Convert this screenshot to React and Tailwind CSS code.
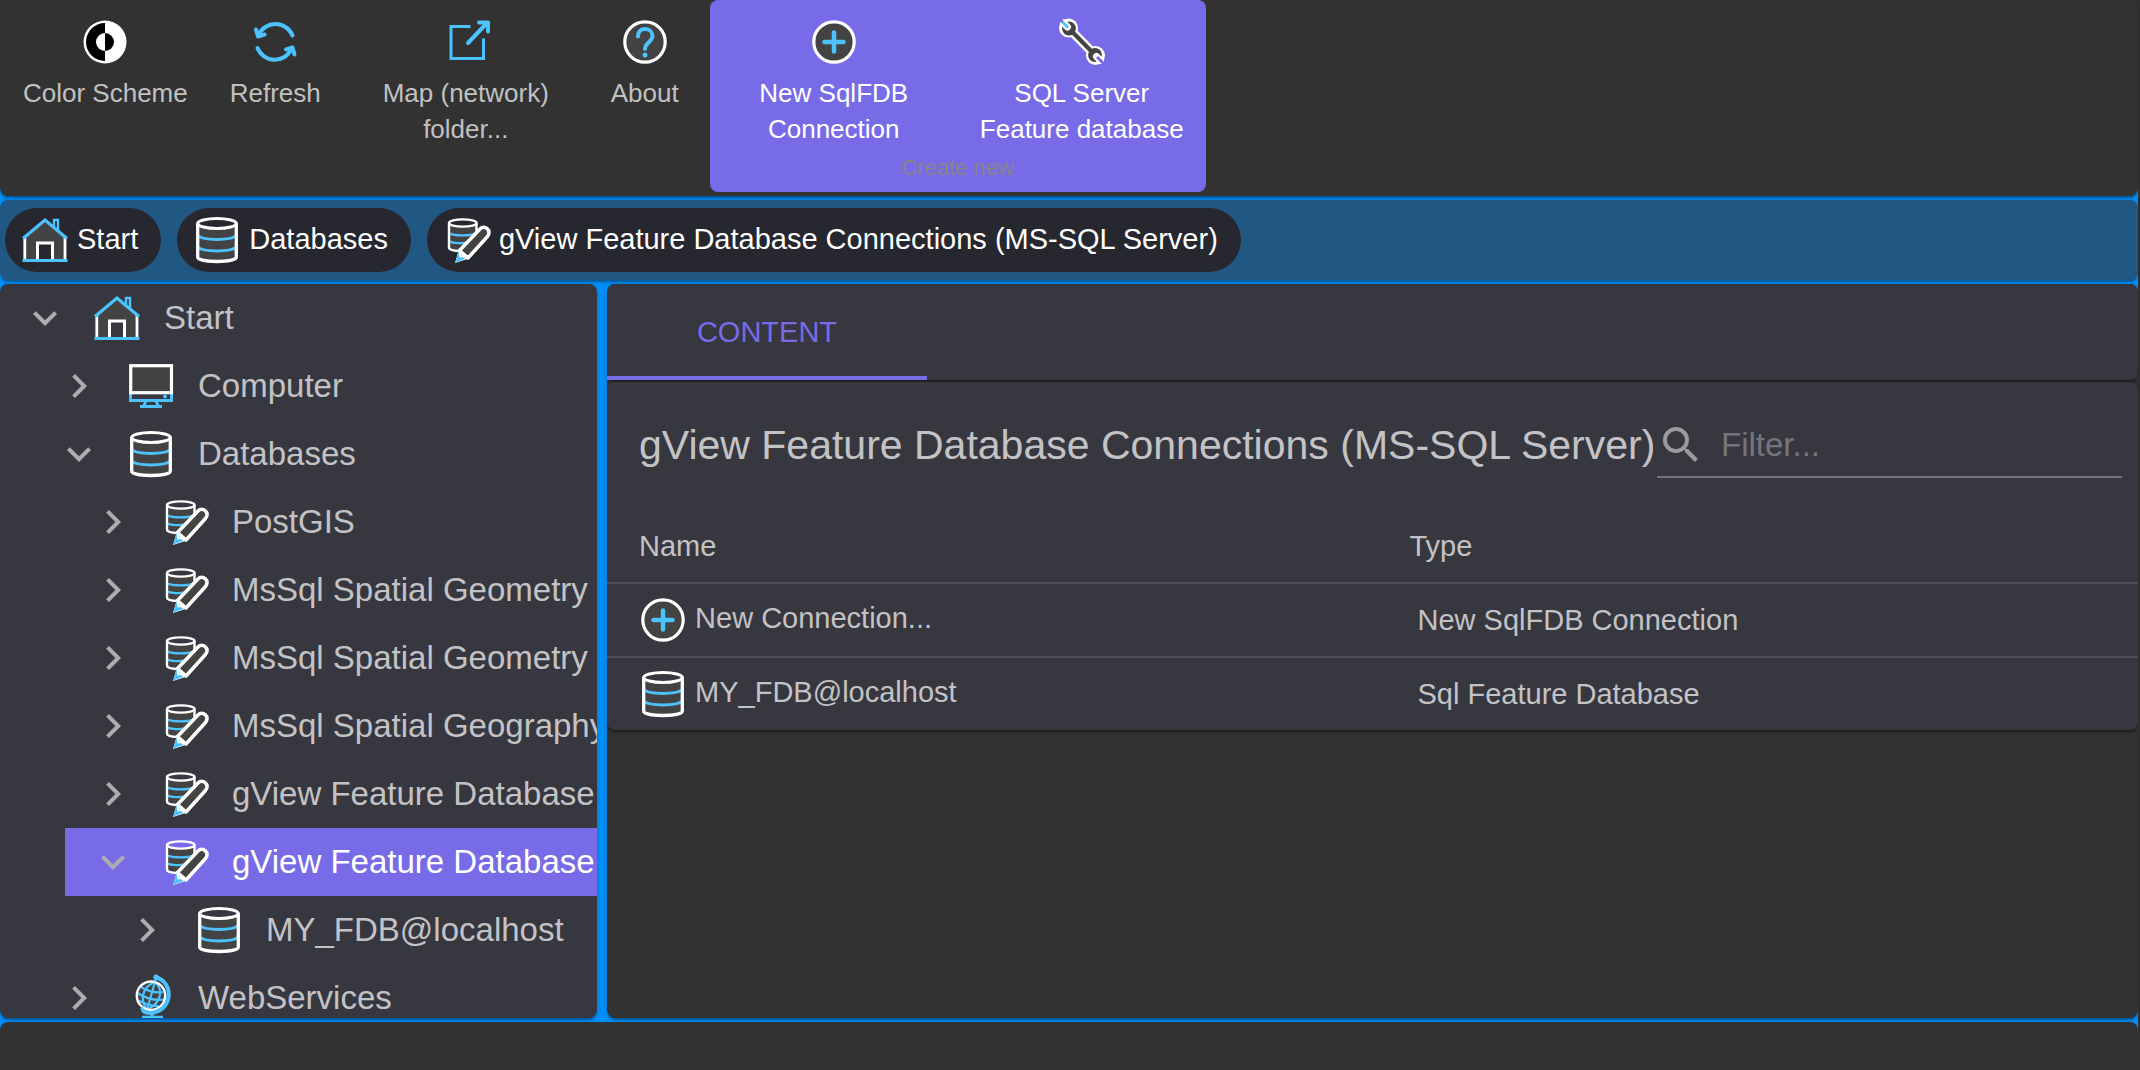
import React, { useState } from 'react';
import { MdChevronRight, MdSearch } from 'react-icons/md';
import { clsx } from 'clsx';

const paper = 'shadow-[0_4px_2px_-2px_rgba(0,0,0,0.2),0_2px_2px_0_rgba(0,0,0,0.14),0_2px_6px_0_rgba(0,0,0,0.12)]';

function Icon({ className, children }) {
  return (
    <svg viewBox="0 0 48 48" fill="none" aria-hidden="true" className={clsx('h-12 w-12 shrink-0', className)}>
      {children}
    </svg>
  );
}

function ContrastIcon() {
  return (
    <Icon>
      <circle cx="24" cy="24" r="21.5" fill="#fff" />
      <path d="M24 5a19 19 0 0 0 0 38z" fill="#000" />
      <path d="M24 15a9 9 0 0 0 0 18z" fill="#fff" />
      <path d="M24 15a9 9 0 0 1 0 18z" fill="#000" />
    </Icon>
  );
}

function RefreshIcon() {
  return (
    <Icon>
      <g stroke="#4cc2ff" strokeWidth="4" strokeLinecap="round" strokeLinejoin="round">
        <path d="M41.500 17.500A18.500 18.500 0 0 0 7.500 17" />
        <path d="M5 11.500L7 18.500L13.500 16.500" />
        <path d="M6.500 30A18.500 18.500 0 0 0 40.500 31" />
        <path d="M43.500 36.500L41.500 29.500L35 31.500" />
      </g>
    </Icon>
  );
}

function ExternalIcon() {
  return (
    <Icon>
      <g stroke="#4cc2ff">
        <path d="M28.500 8.500H9V40.500H41.500V20.500" strokeWidth="3" />
        <path d="M26 25L44 6" strokeWidth="4" strokeLinecap="round" />
        <path d="M37 4.500H46V13.500" strokeWidth="4" strokeLinecap="round" strokeLinejoin="round" />
      </g>
    </Icon>
  );
}

function HelpIcon() {
  return (
    <Icon>
      <circle cx="24" cy="24" r="20.200" fill="#434343" stroke="#fff" strokeWidth="3.200" />
      <path d="M17 18.500C17 13.500 20 11 24 11s7.500 2.700 7.500 7c0 6-7.500 6.500-7.500 13" stroke="#4cc2ff" strokeWidth="4" strokeLinecap="round" />
      <circle cx="24" cy="37" r="2.500" fill="#4cc2ff" />
    </Icon>
  );
}

function AddIcon({ className }) {
  return (
    <Icon className={className}>
      <circle cx="24" cy="24" r="20.200" fill="#434343" stroke="#fff" strokeWidth="3.200" />
      <path d="M24 14.500v19M14.500 24h19" stroke="#4cc2ff" strokeWidth="4.500" strokeLinecap="round" />
    </Icon>
  );
}

function WrenchIcon() {
  return (
    <Icon>
      <g fill="#fff" stroke="#fff">
        <circle cx="10.500" cy="10" r="9.500" stroke="none" />
        <circle cx="37.500" cy="37.500" r="9.500" stroke="none" />
        <path d="M10.500 10L37.500 37.500" strokeWidth="9" />
      </g>
      <g fill="#434343" stroke="#434343">
        <circle cx="11" cy="10.500" r="6.900" stroke="none" />
        <circle cx="37" cy="37" r="6.900" stroke="none" />
        <path d="M11 10.500L37 37" strokeWidth="4.200" />
      </g>
      <path d="M5.500 5L9.500 9M38.500 38.500L42.500 42.500" stroke="#fff" strokeWidth="7" strokeLinecap="round" />
      <path d="M4.500 4L10 9.500" stroke="#4cc2ff" strokeWidth="2.800" />
      <path d="M1 .500L4.500 4M39 39L48 48" stroke="#776be7" strokeWidth="3" />
    </Icon>
  );
}

function HomeIcon() {
  return (
    <Icon>
      <path d="M4 20.500L24 4L44 20.500V44H32V26H17V44H4z" fill="#434343" />
      <path d="M3.800 20V43M44 20V43" stroke="#fff" strokeWidth="2.800" />
      <path d="M16.500 44V27H31.500V44" stroke="#fff" strokeWidth="3" />
      <path d="M33 10.500V4H37V14.500" stroke="#4cc2ff" strokeWidth="2.400" />
      <path d="M2 22.500L24 4L46 22.500" stroke="#4cc2ff" strokeWidth="3.200" />
      <path d="M1.500 44.500H46.500" stroke="#4cc2ff" strokeWidth="3.200" />
    </Icon>
  );
}

function ComputerIcon() {
  return (
    <Icon>
      <path d="M3.500 30V38.500H44.500V30" stroke="#4cc2ff" strokeWidth="3" />
      <path d="M19 39L16.500 44.500M29 39L31.500 44.500M13 44.500H35" stroke="#4cc2ff" strokeWidth="3" />
      <rect x="3.700" y="3.700" width="40.800" height="27" fill="#434343" stroke="#fff" strokeWidth="3.200" />
      <circle cx="38" cy="34.500" r="2" fill="#4cc2ff" />
    </Icon>
  );
}

function DatabaseIcon({ className }) {
  return (
    <Icon className={className}>
      <path d="M4.500 7.500V41C4.500 47 43.500 47 43.500 41V7.500C43.500 14 4.500 14 4.500 7.500z" fill="#434343" />
      <path d="M5.500 20C10 24.500 38 24.500 42.500 20M5.500 31.500C10 36 38 36 42.500 31.500" stroke="#4cc2ff" strokeWidth="3" />
      <path d="M4.700 7.500V41C4.700 47 43.300 47 43.300 41V7.500" stroke="#fff" strokeWidth="3.300" />
      <ellipse cx="24" cy="7.500" rx="19.300" ry="5" stroke="#fff" strokeWidth="3.200" />
    </Icon>
  );
}

function DatabaseEditIcon() {
  return (
    <Icon>
      <path d="M7 7.500V31C7 34 14 34.500 17 34.500L33 20V7.500C33 12 7 12 7 7.500z" fill="#434343" />
      <path d="M7 17.500C11 20 28 20 32 17.500M7 25.500C10 27.500 20 27.500 24 26.500" stroke="#4cc2ff" strokeWidth="2.400" />
      <path d="M6 7V31.500C6 34 11 34.800 16 35M33.500 7V17" stroke="#fff" strokeWidth="2.400" />
      <ellipse cx="19.800" cy="7" rx="13.700" ry="3.600" stroke="#fff" strokeWidth="2.400" />
      <path d="M16.500 34.500L37 13C41.500 8.500 49 14 44.500 20.500L25 42z" fill="#434343" stroke="#fff" strokeWidth="3.500" strokeLinejoin="round" />
      <path d="M16 33.500L12 47L26 42.500L22 38.500L18.500 39z" fill="#fff" />
      <path d="M15.500 35L12.500 46.500L22.500 42.800L19.500 41L16.500 41.500z" fill="#4cc2ff" />
    </Icon>
  );
}

function GlobeIcon() {
  return (
    <Icon>
      <circle cx="24" cy="21.700" r="14.300" fill="#434343" />
      <g stroke="#4cc2ff" strokeWidth="2.200">
        <path d="M28 8L20 35.500M28 8C17 12 11.500 24 20 35.500M28 8C38 17 32.500 30 20 35.500" />
        <path d="M14 13C20 17 28 19 36 18M10.500 19C18 24 28 27 37.500 25.500M11.500 26.500C18 30 25 32.500 32 32" />
      </g>
      <circle cx="24" cy="21.700" r="14.200" stroke="#fff" strokeWidth="2.400" />
      <path d="M29.500 3.500C46 8 46.500 34 27 38.500C23 39.300 18.500 38.500 16 37" stroke="#4cc2ff" strokeWidth="4" />
      <path d="M26.500 2.500L33 4.500M29.500 .500L28 7.500M14.500 33.500L16.500 38M25 39V43M15 43.200H36" stroke="#4cc2ff" strokeWidth="3" />
    </Icon>
  );
}

function ToolButton({ icon, label, wide, light }) {
  return (
    <button
      type="button"
      className={clsx(
        'flex flex-col items-center px-[21px] pt-[18px] text-[26px] leading-9',
        wide && 'w-62',
        light ? 'text-white' : 'text-[#c1c1c1]'
      )}
    >
      {icon}
      <span className="mt-[9px]">{label}</span>
    </button>
  );
}

function Crumb({ icon, label }) {
  return (
    <a href="#" className="flex h-16 items-center gap-2 rounded-full bg-[#27272f] pr-[23px] pl-4 text-[29px] whitespace-nowrap text-white">
      {icon}
      {label}
    </a>
  );
}

const tree = [
  {
    label: 'Start',
    icon: HomeIcon,
    children: [
      { label: 'Computer', icon: ComputerIcon },
      {
        label: 'Databases',
        icon: DatabaseIcon,
        children: [
          { label: 'PostGIS', icon: DatabaseEditIcon },
          { label: 'MsSql Spatial Geometry (OGC)', icon: DatabaseEditIcon },
          { label: 'MsSql Spatial Geometry', icon: DatabaseEditIcon },
          { label: 'MsSql Spatial Geography', icon: DatabaseEditIcon },
          { label: 'gView Feature Database', icon: DatabaseEditIcon },
          {
            label: 'gView Feature Database',
            icon: DatabaseEditIcon,
            selected: true,
            children: [{ label: 'MY_FDB@localhost', icon: DatabaseIcon }]
          }
        ]
      },
      { label: 'WebServices', icon: GlobeIcon }
    ]
  }
];

function TreeItem({ node }) {
  const [open, setOpen] = useState(Boolean(node.children));
  const NodeIcon = node.icon;

  return (
    <li>
      <div className={clsx('flex h-17 items-center pl-6', node.selected ? 'bg-[#776be7] text-white' : 'text-[#c3c3c6]')}>
        <button
          type="button"
          aria-label={open ? 'Collapse' : 'Expand'}
          onClick={() => setOpen(!open)}
          className="shrink-0 text-[#adadb1]"
        >
          <MdChevronRight className={clsx('h-12 w-12', open && 'rotate-90')} />
        </button>
        <a href="#" className="ml-6 flex items-center gap-[23px] text-[33px] whitespace-nowrap">
          <NodeIcon />
          {node.label}
        </a>
      </div>
      {open && node.children && (
        <ul className="pl-[34px]">
          {node.children.map((child, index) => (
            <TreeItem key={index} node={child} />
          ))}
        </ul>
      )}
    </li>
  );
}

const rows = [
  { name: 'New Connection...', type: 'New SqlFDB Connection', icon: AddIcon },
  { name: 'MY_FDB@localhost', type: 'Sql Feature Database', icon: DatabaseIcon }
];

function ContentTable() {
  return (
    <table className="w-full table-fixed border-separate border-spacing-0 text-left text-[29px] leading-9">
      <thead>
        <tr>
          <th className="h-[74px] w-1/2 border-b-2 border-[#4f4f57] p-0 pl-8 font-normal">Name</th>
          <th className="h-[74px] border-b-2 border-[#4f4f57] p-0 pl-[37px] font-normal">Type</th>
        </tr>
      </thead>
      <tbody>
        {rows.map((row, index) => {
          const RowIcon = row.icon;
          const cell = index < rows.length - 1 ? 'h-[74px] border-b-2 border-[#4f4f57] p-0' : 'h-18 p-0';
          return (
            <tr key={row.name}>
              <td className={clsx(cell, 'pl-8')}>
                <RowIcon className="inline align-middle" /> {row.name}
              </td>
              <td className={clsx(cell, 'pl-[45px]')}>{row.type}</td>
            </tr>
          );
        })}
      </tbody>
    </table>
  );
}

export default function App() {
  const [filter, setFilter] = useState('');

  return (
    <div className="h-screen bg-[#323232] pr-0.5 font-['Liberation_Sans',Arial,sans-serif]">
      <div className="flex h-full flex-col gap-1 bg-[#0090f8]">
        {/* Toolbar */}
        <header className={clsx('flex rounded-b-lg bg-[#323232] pb-1 pl-0.5', paper)}>
          <ToolButton icon={<ContrastIcon />} label="Color Scheme" />
          <ToolButton icon={<RefreshIcon />} label="Refresh" />
          <ToolButton icon={<ExternalIcon />} label="Map (network) folder..." wide />
          <ToolButton icon={<HelpIcon />} label="About" />
          <div className="ml-2.5 rounded-lg bg-[#776be7] pb-2 text-center">
            <div className="flex">
              <ToolButton icon={<AddIcon />} label="New SqlFDB Connection" wide light />
              <ToolButton icon={<WrenchIcon />} label="SQL Server Feature database" wide light />
            </div>
            <div className="mt-[5px] text-[22px] leading-8 text-[#85858a]">Create new</div>
          </div>
        </header>

        {/* Breadcrumbs */}
        <nav className={clsx('flex items-center gap-4 rounded-lg bg-[#205783] px-[5px] py-2', paper)}>
          <Crumb icon={<HomeIcon />} label="Start" />
          <Crumb icon={<DatabaseIcon />} label="Databases" />
          <Crumb icon={<DatabaseEditIcon />} label="gView Feature Database Connections (MS-SQL Server)" />
        </nav>

        <div className="flex min-h-0 flex-1 gap-2.5">
          <aside className={clsx('w-[597px] shrink-0 overflow-hidden rounded-lg bg-[#373740]', paper)}>
            <ul className="-ml-[3px]">
              {tree.map((node) => (
                <TreeItem key={node.label} node={node} />
              ))}
            </ul>
          </aside>

          <main className={clsx('min-w-0 flex-1 overflow-hidden rounded-lg bg-[#323232]', paper)}>
            <div role="tablist" className={clsx('flex h-24 rounded-lg bg-[#373740]', paper)}>
              <button
                type="button"
                role="tab"
                aria-selected="true"
                className="w-80 border-b-4 border-[#776be7] pt-1.5 text-[29px] text-[#776be7] uppercase"
              >
                Content
              </button>
            </div>

            <section className={clsx('mt-0.5 rounded-lg bg-[#373740] text-[#c3c3c6]', paper)}>
              <div className="flex h-32 items-center justify-between pr-4 pl-8">
                <h1 className="text-[41px] whitespace-nowrap">gView Feature Database Connections (MS-SQL Server)</h1>
                <label className="flex h-16 w-[465px] shrink-0 items-center gap-4 border-b-2 border-[#75757b]">
                  <MdSearch className="h-12 w-12 shrink-0 text-[#9b9b9f]" />
                  <input
                    type="text"
                    aria-label="Filter"
                    placeholder="Filter..."
                    value={filter}
                    onChange={(e) => setFilter(e.target.value)}
                    className="w-full bg-transparent text-[33px] outline-none placeholder:text-[#75757b]"
                  />
                </label>
              </div>
              <ContentTable />
            </section>
          </main>
        </div>

        <footer className="h-12 shrink-0 rounded-t-lg bg-[#323232]" />
      </div>
    </div>
  );
}
